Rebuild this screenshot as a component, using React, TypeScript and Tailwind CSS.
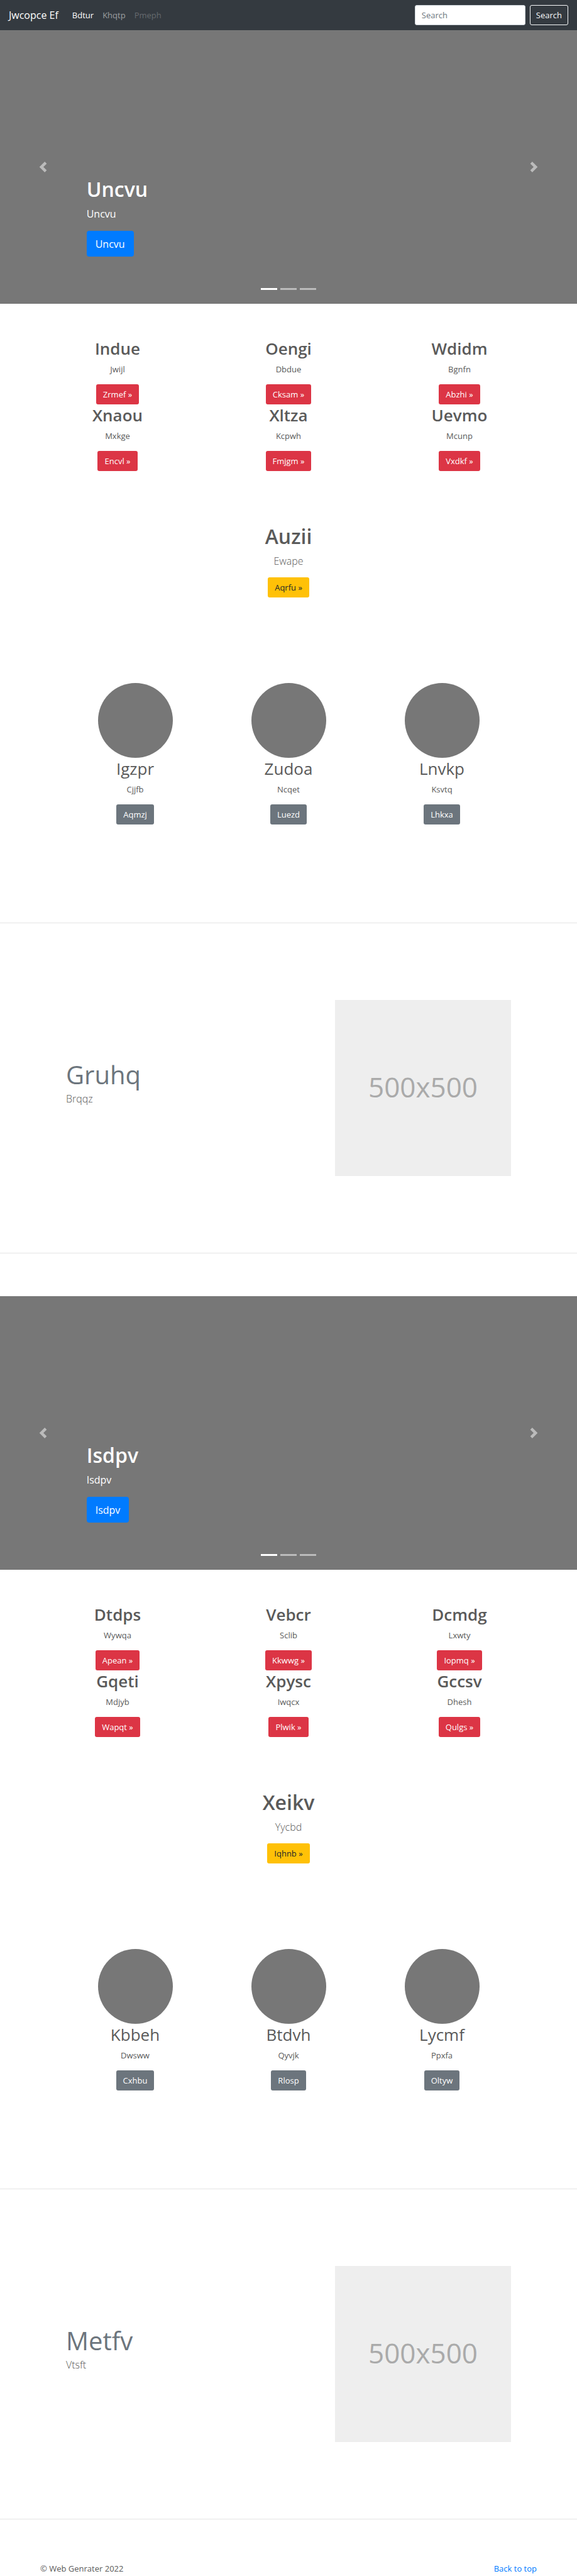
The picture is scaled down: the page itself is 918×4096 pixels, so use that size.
import React from "react";

type Entry = { title: string; text: string; action: string };

type SectionData = {
  hero: string;
  cards: Entry[];
  banner: Entry;
  people: Entry[];
  feature: { title: string; text: string };
};

const sections: SectionData[] = [
  {
    hero: "Uncvu",
    cards: [
      { title: "Indue", text: "Jwijl", action: "Zrmef" },
      { title: "Oengi", text: "Dbdue", action: "Cksam" },
      { title: "Wdidm", text: "Bgnfn", action: "Abzhi" },
      { title: "Xnaou", text: "Mxkge", action: "Encvl" },
      { title: "Xltza", text: "Kcpwh", action: "Fmjgm" },
      { title: "Uevmo", text: "Mcunp", action: "Vxdkf" },
    ],
    banner: { title: "Auzii", text: "Ewape", action: "Aqrfu" },
    people: [
      { title: "Igzpr", text: "Cjjfb", action: "Aqmzj" },
      { title: "Zudoa", text: "Ncqet", action: "Luezd" },
      { title: "Lnvkp", text: "Ksvtq", action: "Lhkxa" },
    ],
    feature: { title: "Gruhq", text: "Brqqz" },
  },
  {
    hero: "Isdpv",
    cards: [
      { title: "Dtdps", text: "Wywqa", action: "Apean" },
      { title: "Vebcr", text: "Sclib", action: "Kkwwg" },
      { title: "Dcmdg", text: "Lxwty", action: "Iopmq" },
      { title: "Gqeti", text: "Mdjyb", action: "Wapqt" },
      { title: "Xpysc", text: "Iwqcx", action: "Plwik" },
      { title: "Gccsv", text: "Dhesh", action: "Qulgs" },
    ],
    banner: { title: "Xeikv", text: "Yycbd", action: "Iqhnb" },
    people: [
      { title: "Kbbeh", text: "Dwsww", action: "Cxhbu" },
      { title: "Btdvh", text: "Qyvjk", action: "Rlosp" },
      { title: "Lycmf", text: "Ppxfa", action: "Oltyw" },
    ],
    feature: { title: "Metfv", text: "Vtsft" },
  },
];

const buttonBase =
  "flex h-8 items-center rounded-[3px] px-[11px] text-[13px] leading-5";

function Navbar() {
  return (
    <header className="flex h-12 items-center bg-[#343a40] px-3.5">
      <a href="#top" className="mr-[22px] text-[16px] leading-6 text-white">
        Jwcopce Ef
      </a>
      <nav className="flex gap-3.5 text-[13px] leading-5">
        <a href="#home" className="text-white">
          Bdtur
        </a>
        <a href="#link" className="text-white/50">
          Khqtp
        </a>
        <a href="#disabled" aria-disabled="true" className="text-white/25">
          Pmeph
        </a>
      </nav>
      <form className="ml-auto flex gap-[7px]" onSubmit={(e) => e.preventDefault()}>
        <input
          type="text"
          placeholder="Search"
          aria-label="Search"
          className="h-8 w-44 rounded-[3px] border border-[#ced4da] bg-white px-2.5 text-[13px] text-[#495057] placeholder:text-[#6c757d]"
        />
        <button
          type="submit"
          className="h-8 rounded-[3px] border border-[#f8f9fa] px-[9px] text-[13px] leading-5 text-[#f8f9fa]"
        >
          Search
        </button>
      </form>
    </header>
  );
}

function Chevron({ direction }: { direction: "previous" | "next" }) {
  return (
    <button
      type="button"
      aria-label={direction}
      className="flex items-center justify-center opacity-50"
    >
      <svg viewBox="0 0 8 8" className="size-[17px]" fill="#fff" aria-hidden="true">
        {direction === "previous" ? (
          <path d="M5.25 0l-4 4 4 4 1.5-1.5L4.25 4l2.5-2.5L5.25 0z" />
        ) : (
          <path d="M2.75 0l-1.5 1.5L3.75 4l-2.5 2.5L2.75 8l4-4-4-4z" />
        )}
      </svg>
    </button>
  );
}

function Hero({ label }: { label: string }) {
  return (
    <section className="relative grid h-[435px] grid-cols-[15%_1fr_15%] bg-[#777] text-white">
      <Chevron direction="previous" />
      <div className="flex flex-col items-start justify-end pb-[75px]">
        <h1 className="text-[32px] leading-[43px] font-semibold">{label}</h1>
        <p className="mt-[5px] text-[16px] leading-[26px]">{label}</p>
        <a
          href="#more"
          className="mt-3.5 flex h-[41px] items-center rounded-[4px] bg-[#007bff] px-3.5 text-[16px] leading-6"
        >
          {label}
        </a>
      </div>
      <Chevron direction="next" />
      <div className="absolute inset-x-0 bottom-[22px] flex justify-center gap-[5px]">
        <span className="h-[3px] w-[26px] bg-white" />
        <span className="h-[3px] w-[26px] bg-white/50" />
        <span className="h-[3px] w-[26px] bg-white/50" />
      </div>
    </section>
  );
}

function Card({ entry }: { entry: Entry }) {
  return (
    <div className="flex flex-col items-center">
      <h2 className="text-[26px] leading-[35px] font-semibold">{entry.title}</h2>
      <p className="mt-[5px] text-[13px] leading-5">{entry.text}</p>
      <a href="#details" className={`${buttonBase} mt-3.5 bg-[#dc3545] text-white`}>
        {entry.action} »
      </a>
    </div>
  );
}

function Person({ entry }: { entry: Entry }) {
  return (
    <div className="flex flex-col items-center">
      <div className="size-[119px] rounded-full bg-[#777]" />
      <h2 className="text-[26px] leading-[35px]">{entry.title}</h2>
      <p className="mt-[5px] text-[13px] leading-5">{entry.text}</p>
      <a href="#profile" className={`${buttonBase} mt-3.5 bg-[#6c757d] text-white`}>
        {entry.action}
      </a>
    </div>
  );
}

function Section({ data }: { data: SectionData }) {
  return (
    <>
      <Hero label={data.hero} />
      <div className="mx-[51px] mt-[54px] grid grid-cols-3">
        {data.cards.map((entry) => (
          <Card key={entry.title} entry={entry} />
        ))}
      </div>
      <div className="mt-[82px] flex flex-col items-center">
        <h1 className="text-[32px] leading-[43px] font-semibold">{data.banner.title}</h1>
        <p className="mt-[5px] text-[16px] leading-[26px] font-light">{data.banner.text}</p>
        <a href="#offer" className={`${buttonBase} mt-[13px] bg-[#ffc107] text-[#212529]`}>
          {data.banner.action} »
        </a>
      </div>
      <div className="mx-[93px] mt-[136px] grid grid-cols-3">
        {data.people.map((entry) => (
          <Person key={entry.title} entry={entry} />
        ))}
      </div>
      <hr className="mt-[156px] border-[#e5e5e5]" />
      <div className="mx-[105px] my-[122px] flex items-center justify-between">
        <div className="pb-4">
          <h2 className="text-[40px] leading-[50px] text-[#6c757d]">{data.feature.title}</h2>
          <p className="text-[16px] leading-[26px] font-light">{data.feature.text}</p>
        </div>
        <div className="flex size-[280px] items-center justify-center bg-[#eee] pb-1 text-[44px] text-[#aaa]">
          500x500
        </div>
      </div>
      <hr className="mb-[68px] border-[#e5e5e5]" />
    </>
  );
}

export default function App() {
  return (
    <div
      id="top"
      className="bg-white font-['Open_Sans','Noto_Sans',sans-serif] text-[#5a5a5a]"
    >
      <Navbar />
      <main>
        {sections.map((data) => (
          <Section key={data.hero} data={data} />
        ))}
      </main>
      <footer className="mx-16 flex justify-between text-[13px] leading-5">
        <p>© Web Genrater 2022</p>
        <a href="#top" className="text-[#007bff]">
          Back to top
        </a>
      </footer>
    </div>
  );
}
